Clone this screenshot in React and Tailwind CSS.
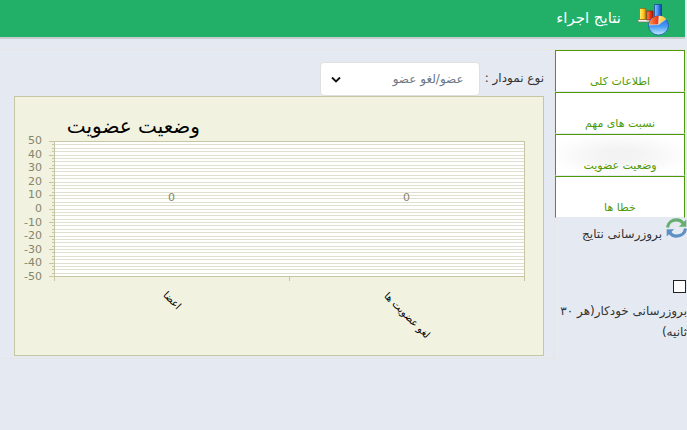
import React from "react";

const sans = "font-['DejaVu_Sans',sans-serif]";

const tabs = [
  { label: "اطلاعات کلی" },
  { label: "نسبت های مهم" },
  { label: "وضعیت عضویت", active: true },
  { label: "خطا ها" },
];

const ticks = [50, 40, 30, 20, 10, 0, -10, -20, -30, -40, -50];
const minor = Array.from({ length: 41 }, (_, i) => i);
const top = 45;
const lineY = (i) => Math.round(top + (i * 135) / 40) + 0.5;

function ReportIcon() {
  return (
    <svg width="34" height="34" viewBox="0 0 34 34" aria-hidden="true">
      <defs>
        <linearGradient id="yel" x1="0" x2="1"><stop offset="0" stopColor="#fff27a" /><stop offset=".6" stopColor="#ffc61a" /><stop offset="1" stopColor="#d07a00" /></linearGradient>
        <linearGradient id="red" x1="0" x2="1"><stop offset="0" stopColor="#ff9a5a" /><stop offset=".5" stopColor="#f03a18" /><stop offset="1" stopColor="#a81a08" /></linearGradient>
        <linearGradient id="blu" x1="0" x2="1"><stop offset="0" stopColor="#8cc4ff" /><stop offset=".5" stopColor="#3f8bf0" /><stop offset="1" stopColor="#0d3da0" /></linearGradient>
        <linearGradient id="pie" x1="0" y1="0" x2="0" y2="1"><stop offset="0" stopColor="#1f62dc" /><stop offset=".55" stopColor="#4a9cf5" /><stop offset="1" stopColor="#c4ecff" /></linearGradient>
        <linearGradient id="slice" x1="0" y1="0" x2="1" y2="0"><stop offset="0" stopColor="#ff9448" /><stop offset="1" stopColor="#ee2a10" /></linearGradient>
        <linearGradient id="org" x1="0" y1="0" x2="1" y2="1"><stop offset="0" stopColor="#fff08a" /><stop offset="1" stopColor="#f8b010" /></linearGradient>
      </defs>
      <path d="M1 17.500h16v2.500H1z" fill="#f4f4ee" stroke="#6f7a6a" strokeWidth=".7" />
      <path d="M2.500 6.500h6.500v11H2.500z" fill="url(#yel)" stroke="#a45b10" strokeWidth=".7" />
      <path d="M9.800 9h6.200v9H9.800z" fill="url(#red)" stroke="#8c1a0a" strokeWidth=".7" />
      <path d="M17.500 2.500h7v12.500h-7z" fill="url(#blu)" stroke="#123c90" strokeWidth=".7" />
      <ellipse cx="21.500" cy="23.500" rx="10" ry="9.500" fill="url(#pie)" stroke="#2459a8" strokeWidth=".8" />
      <path d="M21.500 22.500l-9.500.5c0-5 4.500-9 10-9.200z" fill="url(#slice)" />
      <path d="M21.500 22.500l.5-8.700c3 0 5.500 1.200 7.200 3.300z" fill="url(#org)" />
      <path d="M12 23l9.500-.5 7.700-5.400M21.500 22.500l.5-8.500" fill="none" stroke="#fff" strokeOpacity=".7" strokeWidth=".7" />
    </svg>
  );
}

function RefreshIcon() {
  return (
    <svg className="block shrink-0" width="21" height="20" viewBox="0 0 21 20" aria-hidden="true">
      <path d="M1.500 9.500C2 4.700 6 1.900 10.500 1.900c3 0 5.300 1.300 7 3.600" fill="none" stroke="#68ae72" strokeWidth="3.200" />
      <path d="M20.300 1.500v7.300h-7.500z" fill="#68ae72" />
      <path d="M19.500 10.500c-.5 4.800-4.500 7.600-9 7.600-3 0-5.300-1.300-7-3.600" fill="none" stroke="#5d90c4" strokeWidth="3.200" />
      <path d="M.7 18.500v-7.300h7.500z" fill="#5d90c4" />
    </svg>
  );
}

function Chart() {
  return (
    <svg className="block h-auto w-full" viewBox="0 0 530 260" role="img" aria-label="وضعیت عضویت">
      <rect x=".5" y=".5" width="529" height="259" fill="#f1f2e0" stroke="#c6c6a4" />
      <rect x="40" y="45" width="470" height="135" fill="#fff" />
      <g shapeRendering="crispEdges" stroke="#e0e0d0">
        {minor.map((i) => <path key={i} d={`M40 ${lineY(i)}H510`} />)}
      </g>
      <g shapeRendering="crispEdges" stroke="#c6c6a4">
        {minor.map((i) => <path key={i} d={`M${i % 4 ? 38 : 35} ${lineY(i)}H40`} />)}
        <path d="M40 45.500H510.500V185M40.500 45V185M35 180.500H510M275.500 180V185" fill="none" />
      </g>
      <g className={sans} fontSize="11" fill="#86866c" textAnchor="end" direction="ltr">
        {ticks.map((t, i) => <text key={t} x="28" y={48 + i * 13.6}>{t}</text>)}
        <text x="161" y="105">0</text>
        <text x="396" y="105">0</text>
      </g>
      <g className={sans} fill="#000" direction="rtl">
        <text x="186" y="37" fontSize="20">وضعیت عضویت</text>
        <text transform="translate(163 214) rotate(45)" fontSize="10">اعضا</text>
        <text transform="translate(412 243) rotate(45)" fontSize="10">لغو عضویت ها</text>
      </g>
    </svg>
  );
}

export default function App() {
  return (
    <div dir="rtl" className={`min-h-screen bg-[#e5eaf2] text-[#333333] ${sans}`}>
      <header className="mr-0.5 flex h-[39px] items-center gap-4 border-b-2 border-[#c8cdd0] bg-[#22af68] bg-clip-padding pr-3.5 text-white">
        <ReportIcon />
        <h1 className="pb-0.5 text-[15px] leading-5">نتایج اجراء</h1>
      </header>
      <div className="mt-[10px] flex items-start border-t border-[#e6e6e6]">
        <aside className="w-[133px] shrink-0 border-l border-[#e6e6e6] pb-5">
          <nav className="mr-0.5 flex flex-col">
            {tabs.map((t) => (
              <a
                key={t.label}
                href="#"
                className={`flex h-[42px] items-end justify-center border-x border-t border-b border-x-[#4e9a06] border-t-[#4e9a06] border-b-[#e5eaf2] pb-px text-[11px] leading-4 text-[#4e9a06] ${t.active ? "bg-[radial-gradient(ellipse_at_center,#f3f3f3_20%,#ffffff_80%)]" : "bg-white"}`}
              >
                {t.label}
              </a>
            ))}
          </nav>
          <button type="button" className="flex items-start gap-1 text-xs">
            <RefreshIcon />
            <span className="pt-1.5 leading-5">بروزرسانی نتایج</span>
          </button>
          <label className="mt-9 block text-xs leading-[21px]">
            <input type="checkbox" className="mr-px block size-[13px] appearance-none border border-[#222222] bg-white" />
            <span className="mt-2 block">بروزرسانی خودکار(هر ۳۰ ثانیه)</span>
          </label>
        </aside>
        <main className="min-w-0 flex-1 border-b border-[#e6e6e6] pt-3 pr-[10px] pb-0.5 pl-[14px]">
          <div className="flex h-[34px] gap-[5px] text-xs">
            <label htmlFor="kind" className="pt-1.5 leading-5">نوع نمودار :</label>
            <div className="relative">
              <select id="kind" className="h-[34px] w-40 appearance-none rounded-sm border border-[#dfdfdf] bg-white pr-[15px] pl-8 text-xs text-[#6c7684]">
                <option>عضو/لغو عضو</option>
              </select>
              <svg className="pointer-events-none absolute top-3.5 left-[11px]" width="10" height="7" viewBox="0 0 10 7" aria-hidden="true">
                <path d="M1 1.500l4 4 4-4" fill="none" stroke="#111" strokeWidth="1.800" />
              </svg>
            </div>
          </div>
          <Chart />
        </main>
      </div>
    </div>
  );
}
